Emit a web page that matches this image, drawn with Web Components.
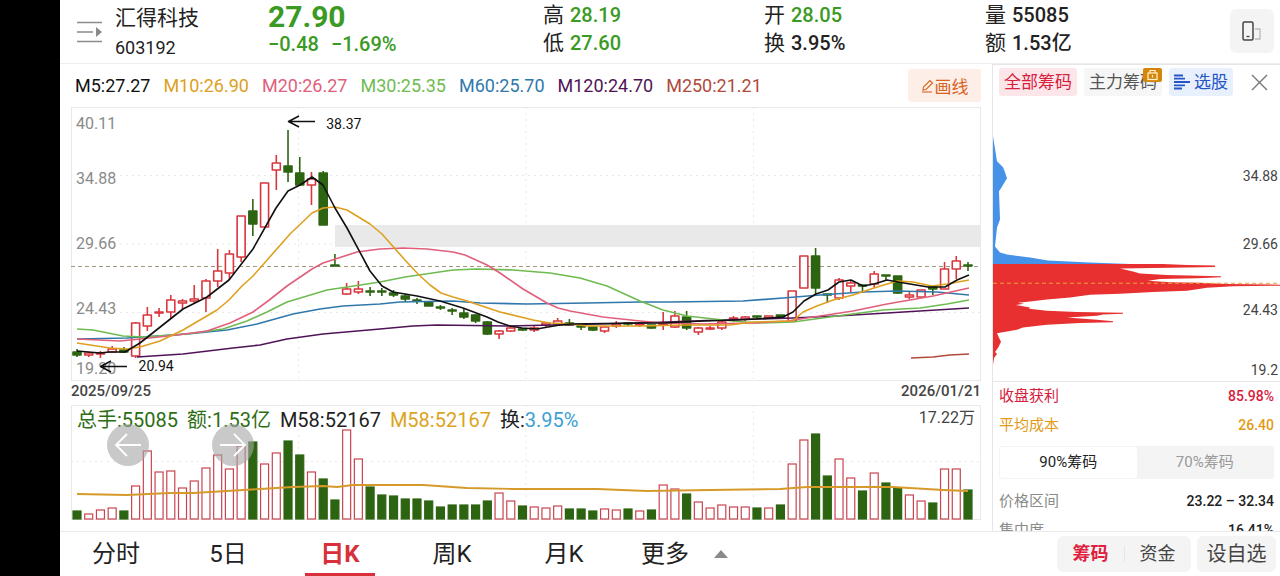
<!DOCTYPE html>
<html lang="zh-CN">
<head>
<meta charset="utf-8">
<meta name="viewport" content="width=device-width, initial-scale=1">
<title>汇得科技 603192</title>
<style>
  html, body { height: 100%; margin: 0; }
  body {
    background: #000;
    color: #222;
    font-family: Roboto, "Noto Sans CJK SC", sans-serif;
    overflow: hidden;
  }
</style>
</head>
<body>
<stock-app>
  <stock-header slot="header" name="汇得科技" code="603192" price="27.90" change="−0.48" percent="−1.69%">
    <stat-item label="高" down>28.19</stat-item>
    <stat-item label="开" down>28.05</stat-item>
    <stat-item label="量">55085</stat-item>
    <stat-item label="低" down>27.60</stat-item>
    <stat-item label="换">3.95%</stat-item>
    <stat-item label="额">1.53亿</stat-item>
  </stock-header>
  <ma-legend slot="charts"></ma-legend>
  <kline-chart slot="charts"></kline-chart>
  <date-range slot="charts" from="2025/09/25" to="2026/01/21"></date-range>
  <volume-chart slot="charts"></volume-chart>
  <chip-panel slot="side"></chip-panel>
  <period-nav slot="footer"></period-nav>
</stock-app>

<script>
const RED = '#d9363e';
const GREEN = '#2d6412';

// colour, body top, body bottom, wick top, wick bottom
const CANDLES = [
  ['g',352,355,349,357], ['r',353,355,352,357], ['r',353,354,351,358], ['r',349,352,346,353], ['g',350,352,347,353],
  ['r',323,356,322,358], ['r',315,326,307,331], ['r',312,313,308,317], ['r',300,312,295,318], ['r',301,303,299,309],
  ['r',299,301,285,303], ['r',281,298,279,312], ['r',271,281,249,287], ['r',254,273,250,280], ['r',216,257,216,262],
  ['g',211,224,199,236], ['r',183,227,183,227], ['r',163,170,155,190], ['g',166,172,130,182], ['g',173,185,157,185],
  ['r',179,185,172,205], ['g',173,225,171,225], ['g',265,266,254,266], ['r',289,294,283,295], ['r',289,292,281,294],
  ['g',291,292,287,296], ['g',291,292,288,296], ['g',293,295,290,297], ['g',296,299,294,302], ['g',300,301,298,304],
  ['g',302,306,302,306], ['g',307,308,305,310], ['g',310,311,308,315], ['g',313,317,308,319], ['g',315,321,314,323],
  ['g',322,334,321,335], ['r',331,334,330,339], ['r',328,331,326,332], ['g',329,330,328,331], ['r',328,330,325,332],
  ['r',323,325,322,328], ['r',321,324,318,326], ['g',323,325,319,326], ['g',326,327,325,330], ['g',327,330,327,331],
  ['r',327,331,326,333], ['r',324,326,321,328], ['g',323,324,322,326], ['r',324,325,322,327], ['g',325,328,325,329],
  ['r',324,325,312,330], ['r',316,327,311,328], ['g',317,328,311,330], ['r',328,332,327,335], ['r',328,329,326,330],
  ['r',322,328,321,330], ['r',318,319,316,322], ['r',317,319,316,321], ['g',316,317,316,319], ['r',316,318,316,318],
  ['g',315,317,315,318], ['r',291,321,291,321], ['r',256,288,256,288], ['g',256,288,248,294], ['g',294,295,294,303],
  ['r',280,298,278,300], ['r',283,286,280,292], ['g',285,286,285,293], ['r',274,284,271,288], ['g',275,276,275,280],
  ['g',276,293,276,294], ['r',295,297,291,299], ['r',290,297,290,297], ['g',287,289,287,295], ['r',269,289,262,289],
  ['r',261,269,256,279], ['g',265,266,262,271]
];

const VOLUME_TOPS = [
  511,514,510,508,511,486,451,472,471,488,481,468,455,469,446,442,464,453,441,455,472,479,500,430,459,487,
  495,496,499,499,501,507,505,505,505,501,493,501,506,507,508,506,509,509,511,509,510,509,511,510,485,489,
  494,502,508,505,507,507,508,508,505,464,440,434,476,459,478,491,473,483,488,495,501,503,469,469,490
];

const AVERAGES = [
  { name: 'M5', value: '27.27', color: '#111', points: '77,351 100,353 109,352 125,352 140,343 183,309 207,297 229,280 253,249 276,208 288,191 300,185 312,177 323,185 335,208 347,228 370,271 382,286 393,292 417,296 440,301 463,308 487,317 498,322 510,326 522,328 537,329 548,327 560,325 570,324 640,323 663,323 703,321 737,320 757,319 783,317 793,312 804,301 816,294 828,290 839,282 851,280 863,286 874,284 887,280 898,282 910,284 928,287 945,287 957,280 969,275' },
  { name: 'M10', value: '26.90', color: '#dea01e', points: '77,343 110,348 127,349 140,347 160,341 183,330 217,310 229,300 242,286 253,276 268,259 290,234 312,213 323,208 335,207 347,210 370,224 382,234 405,260 418,274 430,285 441,293 453,297 467,301 500,312 533,320 550,323 573,324 587,326 640,326 687,325 730,325 753,322 793,321 803,312 817,306 833,300 853,295 874,288 887,284 898,281 913,282 932,286 947,284 969,280' },
  { name: 'M20', value: '26.27', color: '#e0607c', points: '77,339 120,341 140,339 177,335 207,331 230,323 253,312 268,301 287,286 312,269 323,263 357,252 380,249 403,248 427,249 453,252 465,255 487,265 500,273 523,289 547,303 558,308 570,311 603,317 640,321 663,323 703,324 753,323 787,321 820,316 853,311 887,304 910,300 933,296 969,288' },
  { name: 'M30', value: '25.35', color: '#6fbb52', points: '77,329 93,330 123,336 143,337 187,334 223,329 247,321 267,312 287,302 327,290 380,282 405,277 453,270 477,269 513,270 550,273 580,278 607,286 640,301 663,310 687,316 723,320 757,323 793,322 837,316 883,310 920,308 947,304 969,300' },
  { name: 'M60', value: '25.70', color: '#3078ac', points: '77,339 127,338 187,334 227,330 257,324 293,314 320,309 343,306 380,304 400,302 453,301 480,303 527,304 587,303 640,302 670,302 743,301 783,298 820,295 863,292 897,291 937,292 969,295' },
  { name: 'M120', value: '24.70', color: '#4f1456', points: '137,357 183,354 233,348 260,345 287,339 323,334 380,329 413,326 437,325 507,326 553,325 640,323 720,320 793,318 837,316 887,313 969,308' },
  { name: 'M250', value: '21.21', color: '#b04a3c', points: '911,358 933,357 950,355 969,354' }
];

const VOLUME_AVERAGE = '77,494 127,495 170,493 193,493 227,491 260,489 293,487 323,486 337,487 353,485 380,485 423,485 467,488 513,489 597,489 647,491 710,490 780,489 807,487 893,487 943,490 968,491';

const barX = (i) => 77 + i * 891 / (CANDLES.length - 1);

class StockApp extends HTMLElement {
  constructor() {
    super();
    this.attachShadow({ mode: 'open' }).innerHTML = `
      <style>
        :host { display: flex; flex-direction: column; height: 100vh; margin-left: 60px; background: #fff; }
        main { display: flex; flex: 1; min-height: 0; }
        .charts { display: flex; flex-direction: column; flex: 1; min-width: 0; padding: 0 11px 11px; }
      </style>
      <slot name="header"></slot>
      <main>
        <div class="charts"><slot name="charts"></slot></div>
        <slot name="side"></slot>
      </main>
      <slot name="footer"></slot>
    `;
  }
}
customElements.define('stock-app', StockApp);

class StatItem extends HTMLElement {
  connectedCallback() {
    this.attachShadow({ mode: 'open' }).innerHTML = `
      <style>
        :host { display: flex; gap: 6px; font-size: 20px; line-height: 28px; white-space: nowrap; }
        :host([down]) .value { color: #3a9a24; }
        .label { font-size: 21px; }
        .value { font-weight: 500; }
      </style>
      <span class="label">${this.getAttribute('label')}</span>
      <span class="value"><slot></slot></span>
    `;
  }
}
customElements.define('stat-item', StatItem);

class StockHeader extends HTMLElement {
  connectedCallback() {
    const get = (key) => this.getAttribute(key) || '';
    this.attachShadow({ mode: 'open' }).innerHTML = `
      <style>
        :host { display: flex; height: 64px; box-sizing: border-box; border-bottom: 1px solid #eee; }
        button { border: 0; padding: 0; background: none; cursor: pointer; }
        .list { width: 55px; padding-left: 16px; text-align: left; }
        .list svg, .rotate svg { display: block; }
        .title { width: 153px; padding-top: 4px; }
        h1 { margin: 0; font-size: 21px; font-weight: 400; line-height: 29px; }
        .code { font-size: 18px; line-height: 29px; }
        .quote { width: 275px; color: #3a9a24; }
        .price { font-size: 30px; font-weight: 700; line-height: 34px; }
        .change { display: flex; gap: 12px; font-size: 20px; font-weight: 500; line-height: 20px; }
        .stats { display: grid; grid-template-columns: repeat(3, 1fr); align-content: start; flex: 1; margin-right: 24px; padding-top: 1px; }
        .rotate {
          display: grid; place-items: center; width: 44px; height: 44px;
          margin: 9px 6px 0 0; border-radius: 6px; background: #f4f4f4;
        }
      </style>
      <button class="list" aria-label="股票列表">
        <svg width="27" height="22" viewBox="0 0 27 22" fill="none" stroke="#8a8a8a" stroke-width="1.5">
          <path d="M1 1.5H26M1 11H17M1 20.5H26"/><path d="M20 6L26 11L20 16Z" fill="#8a8a8a" stroke="none"/>
        </svg>
      </button>
      <div class="title">
        <h1>${get('name')}</h1>
        <div class="code">${get('code')}</div>
      </div>
      <div class="quote">
        <div class="price">${get('price')}</div>
        <div class="change"><span>${get('change')}</span><span>${get('percent')}</span></div>
      </div>
      <div class="stats"><slot></slot></div>
      <button class="rotate" aria-label="切换竖屏">
        <svg width="20" height="20" viewBox="0 0 20 20" fill="none">
          <path d="M13 8H18V18H13" stroke="#bbb" stroke-width="1.3"/>
          <rect x="1" y="1" width="10" height="18" rx="1.5" stroke="#444" stroke-width="1.5"/>
          <path d="M4.5 15.5H7.5" stroke="#444" stroke-width="1.3"/>
        </svg>
      </button>
    `;
  }
}
customElements.define('stock-header', StockHeader);

class MaLegend extends HTMLElement {
  constructor() {
    super();
    const items = AVERAGES.map((a) => `<span style="color:${a.color}">${a.name}:${a.value}</span>`).join('');
    this.attachShadow({ mode: 'open' }).innerHTML = `
      <style>
        :host { display: flex; align-items: center; gap: 13px; height: 43px; padding-left: 4px; font-size: 18px; white-space: nowrap; }
        button {
          display: flex; align-items: center; justify-content: center; gap: 1px; width: 73px; height: 33px; margin-left: auto;
          padding: 0; border: 0; border-radius: 3px; background: #fdeee8; color: #d9641e; font: 17px "Noto Sans CJK SC", sans-serif;
        }
      </style>
      ${items}
      <button>
        <svg width="13" height="14" viewBox="0 0 13 14" fill="none" stroke="currentColor" stroke-width="1.1">
          <path d="M2 11L2.5 8L9 1.5L11.5 4L5 10.5Z"/><path d="M1 13H11"/>
        </svg>画线
      </button>
    `;
  }
}
customElements.define('ma-legend', MaLegend);

class KlineChart extends HTMLElement {
  constructor() {
    super();
    const candles = CANDLES.map(([c, top, bottom, high, low], i) => {
      const x = barX(i);
      const color = c === 'r' ? RED : GREEN;
      const fill = c === 'r' ? '#fff' : GREEN;
      return `<path d="M${x} ${high}V${low}" stroke="${color}" stroke-width="1.6"/>
        <rect x="${x - 4}" y="${top}" width="8" height="${bottom - top}" fill="${fill}" stroke="${color}" stroke-width="1.6"/>`;
    }).join('');
    const lines = AVERAGES.slice().reverse()
      .map((a) => `<polyline points="${a.points}" stroke="${a.color}" stroke-width="1.6"/>`).join('');

    this.attachShadow({ mode: 'open' }).innerHTML = `
      <style>
        :host { display: block; position: relative; flex: 1; min-height: 0; border: 1px solid #e9e9e9; box-sizing: border-box; }
        svg { position: absolute; inset: -1px; width: calc(100% + 2px); height: calc(100% + 2px); }
        .tick { position: absolute; left: 4px; color: #8a8a8a; font-size: 16px; line-height: 20px; margin-top: -10px; }
        .mark { position: absolute; color: #111; font-size: 14px; line-height: 20px; margin-top: -10px; }
      </style>
      <span class="tick" style="top:6%">40.11</span>
      <span class="tick" style="top:26%">34.88</span>
      <span class="tick" style="top:50%">29.66</span>
      <span class="tick" style="top:74%">24.43</span>
      <span class="tick" style="top:96%">19.20</span>
      <svg viewBox="71 107 910 274" preserveAspectRatio="none" fill="none" stroke-linejoin="round">
        <path d="M120 175.5H981M120 244H981M120 312.5H981M298.5 107V381M526 107V381M753.5 107V381" stroke="#e8e8e8" stroke-dasharray="2 4"/>
        <rect x="335" y="225" width="646" height="22" fill="#e9e9e9"/>
        <path d="M71 266.5H981" stroke="#a3987f" stroke-dasharray="4 3"/>
        ${candles}
        ${lines}
        <path d="M315 121.5H289M299 116L288.5 121.5L299 127M127 366.5H101M111 361L100.5 366.5L111 372" stroke="#111" stroke-width="1.5"/>
      </svg>
      <span class="mark" style="left:28%;top:6%">38.37</span>
      <span class="mark" style="left:7%;top:95%;padding-left:3px">20.94</span>
    `;
  }
}
customElements.define('kline-chart', KlineChart);

class DateRange extends HTMLElement {
  connectedCallback() {
    this.attachShadow({ mode: 'open' }).innerHTML = `
      <style>
        :host { display: flex; justify-content: space-between; height: 24px; line-height: 20px; font-size: 15px; font-weight: 500; color: #444; }
      </style>
      <time>${this.getAttribute('from')}</time>
      <time>${this.getAttribute('to')}</time>
    `;
  }
}
customElements.define('date-range', DateRange);

class VolumeChart extends HTMLElement {
  constructor() {
    super();
    const bars = VOLUME_TOPS.map((top, i) => {
      const red = CANDLES[i][0] === 'r';
      return `<rect x="${barX(i) - 4}" y="${top}" width="8" height="${519 - top}" fill="${red ? '#fff' : GREEN}" stroke="${red ? '#c8454f' : GREEN}" stroke-width="1.2"/>`;
    }).join('');

    this.attachShadow({ mode: 'open' }).innerHTML = `
      <style>
        :host { display: block; position: relative; height: 115px; border: 1px solid #e9e9e9; box-sizing: border-box; }
        svg.plot { position: absolute; inset: -1px; width: calc(100% + 2px); height: calc(100% + 2px); }
        .legend { position: relative; display: flex; gap: 9px; padding: 0 5px; font-size: 20px; line-height: 28px; color: #222; white-space: nowrap; }
        .down { color: #2d6e14; }
        .avg { color: #dca41c; }
        .rate { color: #3c9fd2; }
        .max { margin-left: auto; font-size: 16px; line-height: 24px; color: #444; }
        .pager { position: absolute; top: 18px; left: 35px; display: flex; gap: 63px; }
        button { width: 42px; height: 42px; padding: 0; border: 0; border-radius: 50%; background: rgba(165, 165, 165, .6); }
        button svg { display: block; margin: auto; }
      </style>
      <svg class="plot" viewBox="71 405 910 115" preserveAspectRatio="none" fill="none">
        <path d="M71 461.5H981M298.5 405V520M526 405V520M753.5 405V520" stroke="#e8e8e8" stroke-dasharray="2 4"/>
        ${bars}
        <polyline points="${VOLUME_AVERAGE}" stroke="#d69a2a" stroke-width="1.8"/>
      </svg>
      <div class="legend">
        <span class="down">总手:55085</span>
        <span class="down">额:1.53亿</span>
        <span>M58:52167</span>
        <span class="avg">M58:52167</span>
        <span>换:<span class="rate">3.95%</span></span>
        <span class="max">17.22万</span>
      </div>
      <div class="pager">
        <button aria-label="向左"><svg width="28" height="26" viewBox="0 0 28 26" fill="none" stroke="#fff" stroke-width="1.8"><path d="M27 13H2M13 2L2 13L13 24"/></svg></button>
        <button aria-label="向右"><svg width="28" height="26" viewBox="0 0 28 26" fill="none" stroke="#fff" stroke-width="1.8"><path d="M1 13H26M15 2L26 13L15 24"/></svg></button>
      </div>
    `;
  }
}
customElements.define('volume-chart', VolumeChart);

class ChipPanel extends HTMLElement {
  constructor() {
    super();
    this.attachShadow({ mode: 'open' }).innerHTML = `
      <style>
        :host { display: flex; flex-direction: column; width: 288px; box-sizing: border-box; border-left: 1px solid #e6e6e6; border-top: 1px solid #e6e6e6; overflow: hidden; }
        button { border: 0; padding: 0; background: none; color: inherit; font: inherit; cursor: pointer; white-space: nowrap; }
        .tabs { display: flex; align-items: center; gap: 7px; padding: 3px 12px 0 6px; font-size: 17px; line-height: 28px; }
        .tabs button { position: relative; padding: 0 5px; border-radius: 3px; background: #f6f6f6; color: #555; }
        .tabs .all { background: #fde6ea; color: #d8203c; }
        .tabs .pick { display: flex; align-items: center; gap: 4px; background: #e9f0fd; color: #2456c8; }
        .tabs .close { margin-left: auto; padding: 0; background: none; }
        .close svg { display: block; }
        .lock { position: absolute; top: 0; right: 0; }
        .plot { position: relative; flex: 0 0 285px; border-bottom: 1px solid #e6e6e6; }
        .plot svg { display: block; width: 100%; height: 100%; }
        .plot span { position: absolute; right: 2px; margin-top: -10px; font-size: 14px; line-height: 20px; color: #444; }
        dl { margin: 0; padding: 0 6px; font-size: 15px; }
        dl div { display: flex; justify-content: space-between; line-height: 29px; }
        dt { color: #8a8a8a; }
        dd { margin: 0; font-size: 14px; font-weight: 500; }
        .win, .win dt { color: #d8203c; }
        .cost, .cost dt { color: #e39a14; }
        .segment { display: flex; flex: none; margin: 6px 6px 8px; padding: 1px; border-radius: 3px; background: #f4f4f4; font-size: 15px; line-height: 31px; }
        .segment button { flex: 1; color: #999; }
        .segment .on { border-radius: 3px; background: #fff; color: #222; }
      </style>
      <div class="tabs">
        <button class="all">全部筹码</button>
        <button>主力筹码
          <svg class="lock" width="19" height="14" viewBox="0 0 19 14" fill="none" stroke="#fff3d0" stroke-width="1.2">
            <rect width="19" height="14" rx="2" fill="#d4860c" stroke="none"/>
            <rect x="5" y="5" width="9" height="6.5"/><path d="M7 5V2.5H12V5M9.500 7V9.500"/>
          </svg>
        </button>
        <button class="pick">
          <svg width="16" height="16" viewBox="0 0 16 16" stroke="currentColor" stroke-width="1.8"><path d="M0 1.5H9M0 4.700H11M0 8H16M0 11.300H11M0 14.500H8"/></svg>选股
        </button>
        <button class="close" aria-label="关闭">
          <svg width="17" height="17" viewBox="0 0 17 17" stroke="#777" stroke-width="1.4"><path d="M1 1L16 16M16 1L1 16"/></svg>
        </button>
      </div>
      <div class="plot">
        <svg viewBox="993 97 287 284" preserveAspectRatio="none">
          <path fill="#4692e8" d="M993 137L997 162L1003 168L1005 173L1007 179L1001 189L999 192L1000 220L997 228L995 247L1000 253L1007 255L1030 258L1048 261L1090 263L1143 265H993Z"/>
          <path fill="#e83030" d="M993 264.500H1163L1187 265.500L1215 266L1215 267.500L1187 268L1120 269L1133 272L1140 274L1167 275.300L1221 276.500L1221 277.500L1197 278.500L1160 279.300L1148 281L1170 282.700L1200 283L1227 284.300L1280 285L1280 286L1233 286.700L1207 288L1187 291L1153 292.300L1120 294L1090 295L1070 297.700L1047 299.700L1030 301.700L1018 303L1024 304L1016 305.300L1030 307.700L1029 309L1047 311L1077 312.300L1123 313L1123 314L1103 314.700L1097 316L1067 317.700L1097 320L1113 321.500L1113 322.500L1080 323.300L1047 325L1023 327.700L1017 330L997 333.300L999 338L1001 342L998 348L995 352L997 354L994 358L993 365Z"/>
          <path d="M993 283.500H1280" stroke="#eda03a" stroke-dasharray="4 3"/>
        </svg>
        <span style="top:28%">34.88</span>
        <span style="top:52%">29.66</span>
        <span style="top:75%">24.43</span>
        <span style="top:96%">19.2</span>
      </div>
      <dl>
        <div class="win"><dt>收盘获利</dt><dd>85.98%</dd></div>
        <div class="cost"><dt>平均成本</dt><dd>26.40</dd></div>
      </dl>
      <div class="segment">
        <button class="on">90%筹码</button>
        <button>70%筹码</button>
      </div>
      <dl>
        <div><dt>价格区间</dt><dd>23.22 – 32.34</dd></div>
        <div><dt>集中度</dt><dd>16.41%</dd></div>
      </dl>
    `;
  }
}
customElements.define('chip-panel', ChipPanel);

class PeriodNav extends HTMLElement {
  constructor() {
    super();
    this.attachShadow({ mode: 'open' }).innerHTML = `
      <style>
        :host { display: flex; height: 45px; box-sizing: border-box; border-top: 1px solid #e9e9e9; background: #fff; }
        button { border: 0; padding: 0; background: none; color: inherit; font: inherit; cursor: pointer; white-space: nowrap; }
        nav { display: flex; font-size: 24px; line-height: 44px; }
        nav button { width: 112px; }
        nav .on { display: flex; justify-content: center; color: #d8303a; font-weight: 700; }
        .on span { width: 70px; height: 41px; border-bottom: 3px solid #d8303a; }
        nav .more { display: flex; align-items: center; gap: 25px; width: auto; padding-left: 21px; }
        .actions { display: flex; align-items: center; gap: 6px; margin-left: auto; padding-right: 4px; color: #444; line-height: 36px; }
        .group { display: flex; border-radius: 6px; background: #f4f4f4; font-size: 18px; }
        .group button { width: 67px; }
        .group .chip { color: #e0203c; font-weight: 700; }
        .group .chip + button { background: linear-gradient(#e6e6e6, #e6e6e6) left center / 1px 16px no-repeat; }
        .add { width: 79px; border-radius: 6px; background: #f4f4f4; font-size: 20px; }
      </style>
      <nav>
        <button>分时</button>
        <button>5日</button>
        <button class="on"><span>日K</span></button>
        <button>周K</button>
        <button>月K</button>
        <button class="more">更多
          <svg width="14" height="8" viewBox="0 0 14 8"><path d="M0 8L7 0L14 8Z" fill="#8a8a8a"/></svg>
        </button>
      </nav>
      <div class="actions">
        <div class="group"><button class="chip">筹码</button><button>资金</button></div>
        <button class="add">设自选</button>
      </div>
    `;
  }
}
customElements.define('period-nav', PeriodNav);
</script>
</body>
</html>
